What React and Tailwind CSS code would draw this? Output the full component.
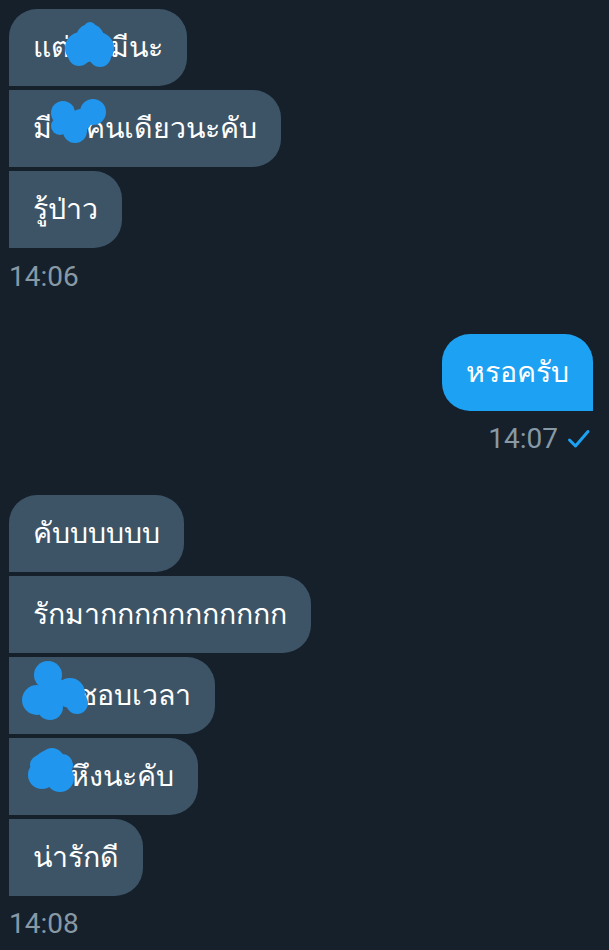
import React from "react";

const font = { fontFamily: "Roboto, 'Noto Sans', 'DejaVu Sans', sans-serif" };

const Blob = ({ dots }) => (
  <svg
    className="absolute left-0 top-0 overflow-visible pointer-events-none"
    width="1"
    height="1"
  >
    {dots.map(([cx, cy, r], i) => (
      <circle key={i} cx={cx} cy={cy} r={r} fill="#2196ee" />
    ))}
  </svg>
);

const Gap = ({ w }) => <span className="inline-block" style={{ width: w }} />;

const In = ({ first, children, blob }) => (
  <div className="flex">
    <div
      className={
        "relative bg-[#3d5466] text-white text-[28.5px] leading-[37px] px-6 py-[20px] whitespace-nowrap rounded-r-[28px] " +
        (first ? "rounded-tl-[28px]" : "")
      }
    >
      {children}
      {blob && <Blob dots={blob} />}
    </div>
  </div>
);

const Time = ({ children }) => (
  <div className="text-[28px] leading-[32px] text-[#8899a6]">{children}</div>
);

const App = () => {
  return (
    <div className="min-h-screen bg-[#15202b] pt-[9px] pl-[9px] pr-4 overflow-hidden" style={font}>
      <div className="flex flex-col gap-1">
        <In
          first
          blob={[[72, 39, 16], [89, 39, 16], [81, 29, 14], [70, 46, 11], [91, 47, 11], [81, 19, 6]]}
        >
          แต่<Gap w={40} />มีนะ
        </In>
        <In blob={[[54, 23, 12], [84, 22, 13], [66, 41, 12], [51, 36, 9], [72, 30, 11]]}>
          มี<Gap w={34} />คนเดียวนะคับ
        </In>
        <In>รู้ป่าว</In>
      </div>
      <div className="mt-[13px]">
        <Time>14:06</Time>
      </div>

      <div className="mt-[41px] flex justify-end">
        <div className="bg-[#1da1f2] text-white text-[28.5px] leading-[37px] px-6 py-[20px] rounded-[28px] rounded-br-none">
          หรอครับ
        </div>
      </div>
      <div className="mt-3 flex justify-end items-center gap-[9px] pr-[2px]">
        <span className="text-[28px] leading-[32px] text-[#8899a6]">14:07</span>
        <svg width="24" height="20" viewBox="0 0 24 20" fill="none">
          <path d="M2.5 11 L8.5 17 L21 2.5" stroke="#1da1f2" strokeWidth="3" strokeLinecap="round" strokeLinejoin="round" />
        </svg>
      </div>

      <div className="mt-10 flex flex-col gap-1">
        <In first>คับบบบบบ</In>
        <In>รักมากกกกกกกกกกก</In>
        <In blob={[[39, 18, 14], [61, 36, 15], [28, 43, 15], [41, 50, 13], [68, 46, 11], [45, 32, 12]]}>
          <Gap w={45} />ชอบเวลา
        </In>
        <In blob={[[41, 30, 18], [33, 37, 14], [51, 40, 14], [43, 22, 12], [53, 27, 11], [31, 27, 10]]}>
          <Gap w={37} />หึงนะคับ
        </In>
        <In>น่ารักดี</In>
      </div>
      <div className="mt-3">
        <Time>14:08</Time>
      </div>
    </div>
  );
};

export default App;
